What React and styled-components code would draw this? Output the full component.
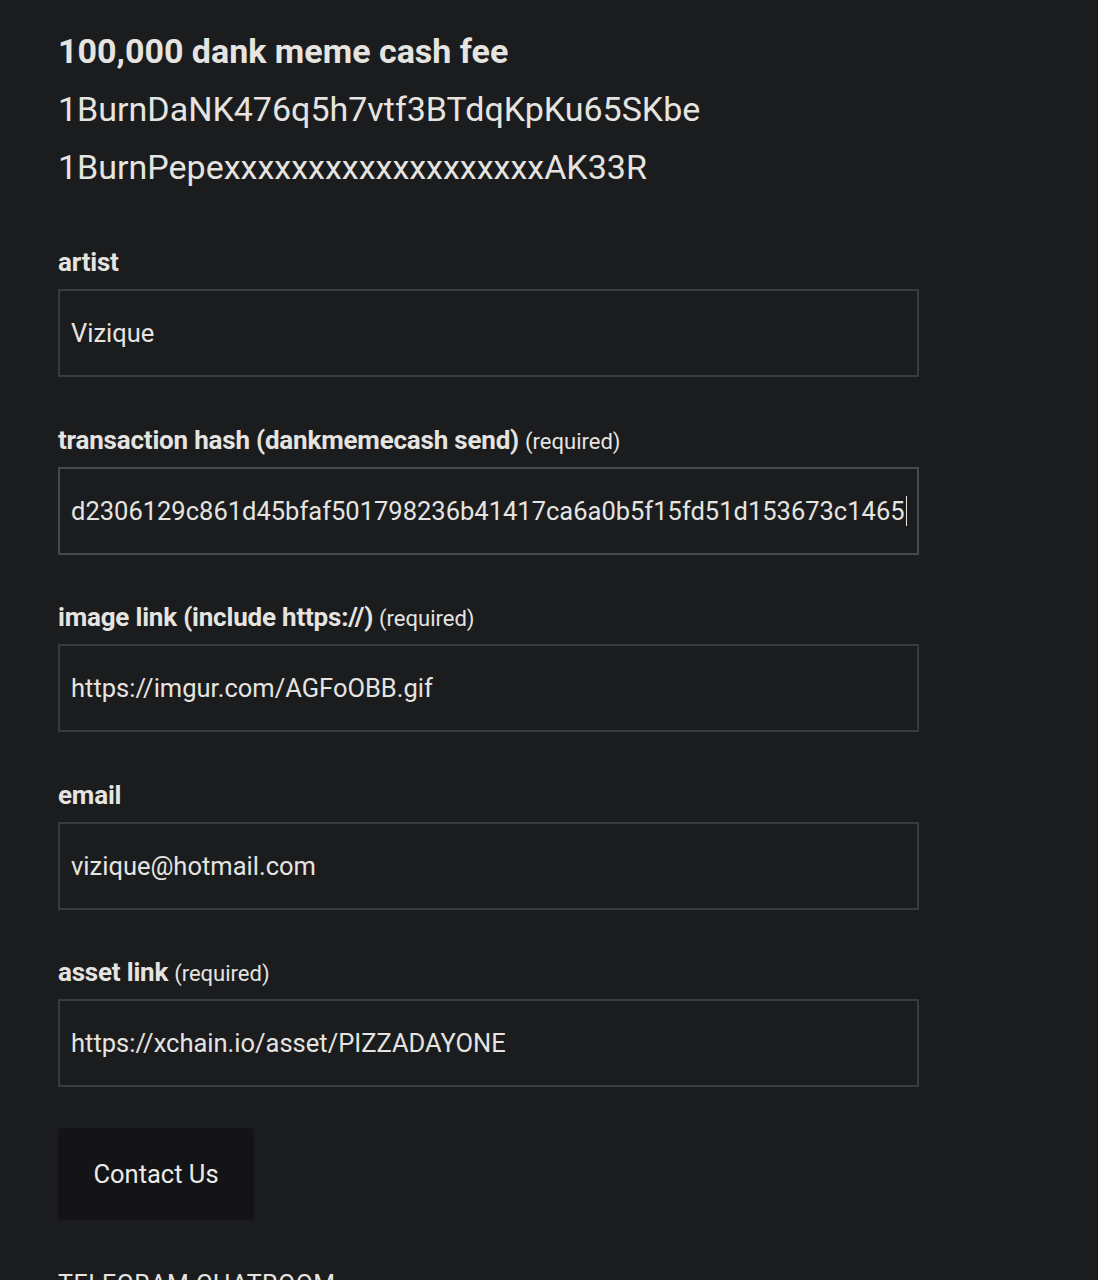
import styled, { createGlobalStyle } from "styled-components";

const GlobalStyle = createGlobalStyle`
  html, body {
    margin: 0;
    padding: 0;
    background: #1b1c1e;
  }
  body {
    font-family: Roboto, "Liberation Sans", Arial, sans-serif;
    color: #e6e4e0;
  }
`;

const Page = styled.div`
  min-height: 1280px;
  background: #1b1c1e;
  padding: 30px 0 0 58px;
  box-sizing: border-box;
  overflow: hidden;
`;

const FeeTitle = styled.h3`
  margin: 0;
  font-size: 34px;
  font-weight: 700;
  line-height: 42px;
  color: #e6e4e0;
`;

const Address = styled.div`
  font-size: 34px;
  line-height: 58px;
  color: #e6e4e0;
`;

const Addresses = styled.div`
  margin-top: 8px;
  margin-bottom: 51px;
`;

const Form = styled.form`
  display: flex;
  flex-direction: column;
  width: 861px;
`;

const Group = styled.div`
  display: flex;
  flex-direction: column;
  margin-bottom: 47.5px;
`;

const Label = styled.label`
  display: block;
  height: 30px;
  font-size: 26px;
  font-weight: 700;
  line-height: 30px;
  margin-bottom: 12px;
  color: #e6e4e0;
  letter-spacing: -0.2px;
`;

const Required = styled.span`
  font-size: 22px;
  font-weight: 400;
  line-height: 1;
  margin-left: 6px;
  letter-spacing: 0;
`;

const Field = styled.div`
  height: 88px;
  box-sizing: border-box;
  border: 2px solid ${(p) => (p.focused ? "#47484a" : "#3a3b3d")};
  background: #1b1c1e;
  display: flex;
  align-items: center;
  padding: 0 11px;
  font-size: 25.5px;
  color: #e6e4e0;
  white-space: nowrap;
  overflow: hidden;
`;

const Caret = styled.span`
  display: inline-block;
  width: 1px;
  height: 30px;
  background: #e6e4e0;
  margin-left: 1px;
`;

const Button = styled.button`
  width: 196px;
  height: 92px;
  margin-top: -7px;
  border: none;
  border-radius: 4px;
  background: #141416;
  color: #ecebe8;
  font-family: Roboto, "Liberation Sans", Arial, sans-serif;
  font-size: 25.5px;
  cursor: pointer;
`;

const Telegram = styled.div`
  margin-top: 50px;
  font-size: 25px;
  letter-spacing: 0.5px;
  text-transform: uppercase;
  color: #e6e4e0;
`;

const fields = [
  { label: "artist", value: "Vizique" },
  {
    label: "transaction hash (dankmemecash send)",
    required: true,
    value: "d2306129c861d45bfaf501798236b41417ca6a0b5f15fd51d153673c1465",
    focused: true,
  },
  { label: "image link (include https://)", required: true, value: "https://imgur.com/AGFoOBB.gif" },
  { label: "email", value: "vizique@hotmail.com" },
  { label: "asset link", required: true, value: "https://xchain.io/asset/PIZZADAYONE" },
];

export default function App() {
  return (
    <Page>
      <GlobalStyle />
      <FeeTitle>100,000 dank meme cash fee</FeeTitle>
      <Addresses>
        <Address>1BurnDaNK476q5h7vtf3BTdqKpKu65SKbe</Address>
        <Address>1BurnPepexxxxxxxxxxxxxxxxxxxAK33R</Address>
      </Addresses>
      <Form onSubmit={(e) => e.preventDefault()}>
        {fields.map((f) => (
          <Group key={f.label}>
            <Label>
              {f.label}
              {f.required && <Required>(required)</Required>}
            </Label>
            <Field focused={f.focused}>
              {f.value}
              {f.focused && <Caret />}
            </Field>
          </Group>
        ))}
        <div>
          <Button type="submit">Contact Us</Button>
        </div>
      </Form>
      <Telegram>Telegram Chatroom</Telegram>
    </Page>
  );
}
